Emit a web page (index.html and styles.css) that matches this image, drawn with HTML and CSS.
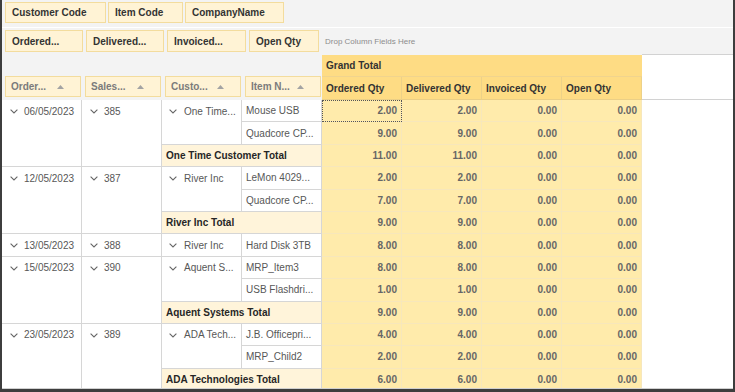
FILE: index.html
```html
<!DOCTYPE html>
<html>
<head>
<meta charset="utf-8">
<link rel="stylesheet" href="styles.css">
</head>
<body>
<div class="pivot">
  <div class="filter-area">
    <div class="field w101">Customer Code</div>
    <div class="field w75">Item Code</div>
    <div class="field w99">CompanyName</div>
  </div>
  <div class="data-area">
    <div class="field tall w78">Ordered...</div>
    <div class="field tall w78">Delivered...</div>
    <div class="field tall w79">Invoiced...</div>
    <div class="field tall w70">Open Qty</div>
    <span class="drop-hint">Drop Column Fields Here</span>
  </div>
  <div class="pivot-head">
    <div class="row-fields">
      <div class="row-field"><span>Order...</span><svg class="sort" viewBox="0 0 7 4" width="7" height="4"><polygon points="0,4 3.5,0 7,4"/></svg></div>
      <div class="row-field"><span>Sales...</span><svg class="sort" viewBox="0 0 7 4" width="7" height="4"><polygon points="0,4 3.5,0 7,4"/></svg></div>
      <div class="row-field"><span>Custo...</span><svg class="sort" viewBox="0 0 7 4" width="7" height="4"><polygon points="0,4 3.5,0 7,4"/></svg></div>
      <div class="row-field"><span>Item N...</span><svg class="sort" viewBox="0 0 7 4" width="7" height="4"><polygon points="0,4 3.5,0 7,4"/></svg></div>
    </div>
    <div class="grand-total">Grand Total</div>
    <div class="col-headers">
      <div class="ch">Ordered Qty</div>
      <div class="ch">Delivered Qty</div>
      <div class="ch">Invoiced Qty</div>
      <div class="ch">Open Qty</div>
    </div>
    <div class="corner"></div>
  </div>
  <div class="pivot-body">
    <div class="grid">
      <!-- group 1 -->
      <div class="rh c1 span3"><span class="lbl"><svg class="chev" viewBox="0 0 8 5" width="8" height="5"><polyline points="0.6,0.6 4,4 7.4,0.6"/></svg>06/05/2023</span></div>
      <div class="rh c2 span3"><span class="lbl"><svg class="chev" viewBox="0 0 8 5" width="8" height="5"><polyline points="0.6,0.6 4,4 7.4,0.6"/></svg>385</span></div>
      <div class="rh c3 span2"><span class="lbl"><svg class="chev" viewBox="0 0 8 5" width="8" height="5"><polyline points="0.6,0.6 4,4 7.4,0.6"/></svg>One Time...</span></div>
      <div class="rh item">Mouse USB</div>
      <div class="dc focus">2.00</div><div class="dc">2.00</div><div class="dc">0.00</div><div class="dc">0.00</div>
      <div class="rh item">Quadcore CP...</div>
      <div class="dc">9.00</div><div class="dc">9.00</div><div class="dc">0.00</div><div class="dc">0.00</div>
      <div class="rh tot">One Time Customer Total</div>
      <div class="dc">11.00</div><div class="dc">11.00</div><div class="dc">0.00</div><div class="dc">0.00</div>
      <!-- group 2 -->
      <div class="rh c1 span3"><span class="lbl"><svg class="chev" viewBox="0 0 8 5" width="8" height="5"><polyline points="0.6,0.6 4,4 7.4,0.6"/></svg>12/05/2023</span></div>
      <div class="rh c2 span3"><span class="lbl"><svg class="chev" viewBox="0 0 8 5" width="8" height="5"><polyline points="0.6,0.6 4,4 7.4,0.6"/></svg>387</span></div>
      <div class="rh c3 span2"><span class="lbl"><svg class="chev" viewBox="0 0 8 5" width="8" height="5"><polyline points="0.6,0.6 4,4 7.4,0.6"/></svg>River Inc</span></div>
      <div class="rh item">LeMon 4029...</div>
      <div class="dc">2.00</div><div class="dc">2.00</div><div class="dc">0.00</div><div class="dc">0.00</div>
      <div class="rh item">Quadcore CP...</div>
      <div class="dc">7.00</div><div class="dc">7.00</div><div class="dc">0.00</div><div class="dc">0.00</div>
      <div class="rh tot">River Inc Total</div>
      <div class="dc">9.00</div><div class="dc">9.00</div><div class="dc">0.00</div><div class="dc">0.00</div>
      <!-- group 3 -->
      <div class="rh c1"><span class="lbl"><svg class="chev" viewBox="0 0 8 5" width="8" height="5"><polyline points="0.6,0.6 4,4 7.4,0.6"/></svg>13/05/2023</span></div>
      <div class="rh c2"><span class="lbl"><svg class="chev" viewBox="0 0 8 5" width="8" height="5"><polyline points="0.6,0.6 4,4 7.4,0.6"/></svg>388</span></div>
      <div class="rh c3"><span class="lbl"><svg class="chev" viewBox="0 0 8 5" width="8" height="5"><polyline points="0.6,0.6 4,4 7.4,0.6"/></svg>River Inc</span></div>
      <div class="rh item">Hard Disk 3TB</div>
      <div class="dc">8.00</div><div class="dc">8.00</div><div class="dc">0.00</div><div class="dc">0.00</div>
      <!-- group 4 -->
      <div class="rh c1 span3"><span class="lbl"><svg class="chev" viewBox="0 0 8 5" width="8" height="5"><polyline points="0.6,0.6 4,4 7.4,0.6"/></svg>15/05/2023</span></div>
      <div class="rh c2 span3"><span class="lbl"><svg class="chev" viewBox="0 0 8 5" width="8" height="5"><polyline points="0.6,0.6 4,4 7.4,0.6"/></svg>390</span></div>
      <div class="rh c3 span2"><span class="lbl"><svg class="chev" viewBox="0 0 8 5" width="8" height="5"><polyline points="0.6,0.6 4,4 7.4,0.6"/></svg>Aquent S...</span></div>
      <div class="rh item">MRP_Item3</div>
      <div class="dc">8.00</div><div class="dc">8.00</div><div class="dc">0.00</div><div class="dc">0.00</div>
      <div class="rh item">USB Flashdri...</div>
      <div class="dc">1.00</div><div class="dc">1.00</div><div class="dc">0.00</div><div class="dc">0.00</div>
      <div class="rh tot">Aquent Systems Total</div>
      <div class="dc">9.00</div><div class="dc">9.00</div><div class="dc">0.00</div><div class="dc">0.00</div>
      <!-- group 5 -->
      <div class="rh c1 span3"><span class="lbl"><svg class="chev" viewBox="0 0 8 5" width="8" height="5"><polyline points="0.6,0.6 4,4 7.4,0.6"/></svg>23/05/2023</span></div>
      <div class="rh c2 span3"><span class="lbl"><svg class="chev" viewBox="0 0 8 5" width="8" height="5"><polyline points="0.6,0.6 4,4 7.4,0.6"/></svg>389</span></div>
      <div class="rh c3 span2"><span class="lbl"><svg class="chev" viewBox="0 0 8 5" width="8" height="5"><polyline points="0.6,0.6 4,4 7.4,0.6"/></svg>ADA Tech...</span></div>
      <div class="rh item">J.B. Officepri...</div>
      <div class="dc">4.00</div><div class="dc">4.00</div><div class="dc">0.00</div><div class="dc">0.00</div>
      <div class="rh item">MRP_Child2</div>
      <div class="dc">2.00</div><div class="dc">2.00</div><div class="dc">0.00</div><div class="dc">0.00</div>
      <div class="rh tot">ADA Technologies Total</div>
      <div class="dc">6.00</div><div class="dc">6.00</div><div class="dc">0.00</div><div class="dc">0.00</div>
    </div>
  </div>
</div>
</body>
</html>
```

FILE: styles.css
```css
* { box-sizing: border-box; }
html, body { margin: 0; padding: 0; background: #ffffff; }

.pivot {
  width: 735px;
  height: 392px;
  border-left: 2px solid #3d3d3d;
  border-right: 2px solid #3d3d3d;
  border-bottom: 3px solid #3d3d3d;
  background: #f3f3f3;
  overflow: hidden;
  display: flex;
  flex-direction: column;
  font-family: "Liberation Sans", Arial, sans-serif;
  font-size: 10px;
  color: #555;
}

/* field buttons */
.filter-area {
  height: 28px;
  flex: none;
  display: flex;
  gap: 2px;
  padding: 2px 0 0 3px;
  border-bottom: 1px solid #ffffff;
}
.data-area {
  height: 26px;
  flex: none;
  display: flex;
  align-items: flex-start;
  gap: 3px;
  padding: 2px 0 0 3px;
}
.field {
  height: 21px;
  display: flex;
  align-items: center;
  padding-left: 6px;
  background: #fff3d5;
  border: 1px solid #f3dc9d;
  font-weight: bold;
  color: #333;
  white-space: nowrap;
}
.field.tall { height: 22px; }
.w101 { width: 101px; }
.w75 { width: 75px; }
.w99 { width: 99px; }
.w78 { width: 78px; }
.w79 { width: 79px; }
.w70 { width: 70px; }
.drop-hint {
  align-self: center;
  margin-left: 3px;
  margin-top: -1px;
  font-size: 8px;
  color: #8c8c8c;
}

/* pivot header */
.pivot-head {
  height: 46px;
  flex: none;
  display: grid;
  grid-template-columns: 320px 320px 1fr;
  grid-template-rows: 23px 23px;
}
.row-fields {
  grid-column: 1;
  grid-row: 1 / span 2;
  display: flex;
  align-items: flex-end;
  gap: 4px;
  padding: 0 0 3px 3px;
}
.row-field {
  width: 76px;
  height: 21px;
  display: flex;
  align-items: center;
  justify-content: space-between;
  padding: 0 16px 0 5px;
  background: #fff3d5;
  border: 1px solid #f3dc9d;
  font-weight: bold;
  color: #7b7b7b;
  white-space: nowrap;
}
.sort { fill: #a3a3a3; display: block; }
.grand-total {
  grid-column: 2;
  grid-row: 1;
  margin-top: 1px;
  background: #fedc84;
  border-bottom: 1px solid #f0d48e;
  font-weight: bold;
  color: #333;
  display: flex;
  align-items: center;
  padding-left: 4px;
}
.col-headers {
  grid-column: 2;
  grid-row: 2;
  display: flex;
}
.ch {
  width: 80px;
  background: #fedc84;
  border-right: 1px solid #edd188;
  border-bottom: 1px solid #ebcf86;
  font-weight: bold;
  color: #333;
  display: flex;
  align-items: center;
  padding-left: 4px;
  white-space: nowrap;
}
.corner {
  grid-column: 3;
  grid-row: 1 / span 2;
  background: #ffffff;
  border-top: 1px solid #d2d2d2;
  border-bottom: 1px solid #d2d2d2;
}

/* pivot body */
.pivot-body {
  flex: 1;
  background: #ffffff;
  border-bottom: 1px solid #d0d0d0;
  overflow: hidden;
}
.grid {
  display: grid;
  grid-template-columns: repeat(8, 80px);
  grid-auto-rows: 22.4px;
}
.rh {
  background: #ffffff;
  border-right: 1px solid #d6d6d6;
  border-bottom: 1px solid #d6d6d6;
  color: #575757;
  white-space: nowrap;
  overflow: hidden;
}
.span3 { grid-row: span 3; }
.span2 { grid-row: span 2; }
.lbl {
  display: flex;
  align-items: center;
  height: 22px;
  gap: 6px;
}
.c1 .lbl, .c2 .lbl { padding-left: 8px; }
.c3 .lbl { padding-left: 7px; gap: 7px; }
.chev {
  display: block;
  fill: none;
  stroke: #666;
  stroke-width: 1.1;
  margin-top: 1px;
}
.item {
  display: flex;
  align-items: center;
  padding-left: 4px;
}
.tot {
  grid-column: span 2;
  background: #fff4da;
  font-weight: bold;
  color: #262626;
  display: flex;
  align-items: center;
  padding-left: 4px;
}
.dc {
  background: #ffebab;
  border-right: 1px solid #f7e7bb;
  border-bottom: 1px solid #f7e7bb;
  display: flex;
  align-items: center;
  justify-content: flex-end;
  padding-right: 4px;
  font-weight: bold;
  color: #666;
}
.dc.focus {
  outline: 1px dotted #555;
  outline-offset: -1px;
}
```
